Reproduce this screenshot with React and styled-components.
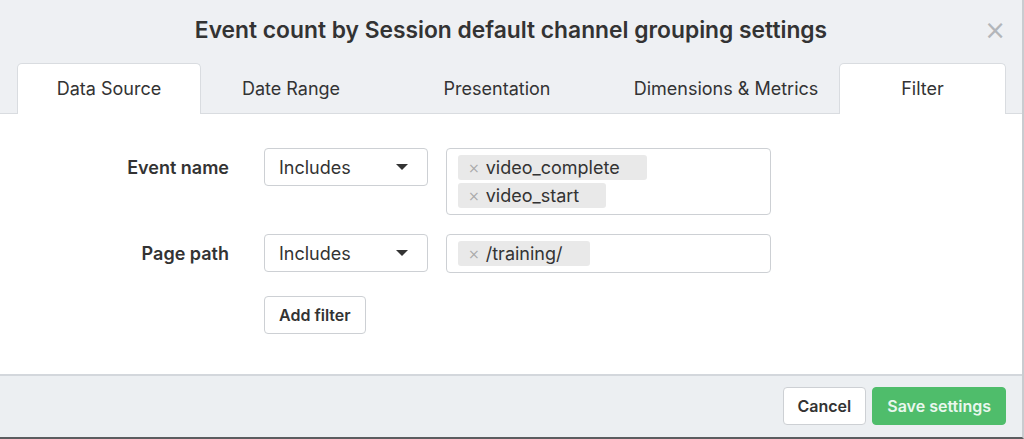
import React from "react";
import styled, { createGlobalStyle } from "styled-components";

const Global = createGlobalStyle`
  html, body { margin: 0; padding: 0; background: #fff; }
  body { font-family: Inter, "Noto Sans", "Liberation Sans", sans-serif; color: #333; }
  * { box-sizing: border-box; }
`;

const Modal = styled.div`
  width: 1024px;
  height: 439px;
  display: flex;
  flex-direction: column;
  background: #fff;
  border-right: 2px solid #c9ccd0;
  border-bottom: 2px solid #5b5d60;
  overflow: hidden;
`;

const Header = styled.div`
  height: 63px;
  flex: none;
  background: #eef0f3;
  display: grid;
  grid-template-columns: 1fr auto 1fr;
  align-items: center;
  padding-bottom: 4px;
`;

const Title = styled.h2`
  grid-column: 2;
  margin: 0;
  font-size: 22.8px;
  font-weight: 600;
  color: #333;
`;

const Close = styled.button`
  grid-column: 3;
  justify-self: end;
  margin-right: 16px;
  border: none;
  background: none;
  padding: 0;
  font-size: 26px;
  line-height: 1;
  color: #b3b6ba;
  font-family: "DejaVu Sans", sans-serif;
`;

const TabStrip = styled.div`
  flex: none;
  height: 51px;
  background: #eef0f3;
  border-bottom: 1px solid #d9dce0;
  padding-left: 17px;
  display: grid;
  grid-template-columns: 184px 180px 232px 226px 167px;
  align-items: end;
`;

const Tab = styled.div`
  height: 51px;
  margin-bottom: -1px;
  display: flex;
  align-items: center;
  justify-content: center;
  font-size: 18px;
  color: #333;
  border: 1px solid ${(p) => (p.$active ? "#d9dce0" : "transparent")};
  border-bottom: none;
  border-radius: 5px 5px 0 0;
  background: ${(p) => (p.$active ? "#fff" : "transparent")};
  padding-bottom: 1px;
`;

const Body = styled.div`
  flex: 1;
  padding-top: 34px;
  display: flex;
  flex-direction: column;
  gap: 19px;
`;

const Row = styled.div`
  display: grid;
  grid-template-columns: 229px 164px 325px;
  align-items: start;
`;

const Label = styled.div`
  line-height: 38px;
  padding-top: 1px;
  text-align: right;
  font-size: 18px;
  font-weight: 600;
  color: #333;
`;

const Select = styled.div`
  height: 38px;
  margin-left: 35px;
  width: 164px;
  border: 1px solid #cdd0d4;
  border-radius: 4px;
  display: flex;
  align-items: center;
  justify-content: space-between;
  padding: 0 19px 0 14px;
  font-size: 18px;
  color: #333;
  background: #fff;
`;

const Caret = styled.span`
  width: 0;
  height: 0;
  border-left: 6px solid transparent;
  border-right: 6px solid transparent;
  border-top: 6px solid #333;
`;

const TagBox = styled.div`
  min-height: 38px;
  margin-left: 53px;
  width: 325px;
  border: 1px solid #cdd0d4;
  border-radius: 4px;
  padding: 6px 11px;
  display: flex;
  flex-wrap: wrap;
  gap: 3px 4px;
  background: #fff;
`;

const Tag = styled.span`
  height: 25px;
  display: inline-flex;
  align-items: center;
  background: #e9e9e9;
  border-radius: 3px;
  padding: 0 27px 0 10px;
  font-size: 18px;
  color: #333;
`;

const TagX = styled.span`
  color: #aaa;
  font-size: 14px;
  margin-right: 6px;
  font-family: "DejaVu Sans", sans-serif;
`;

const ActionRow = styled.div`
  padding-left: 264px;
  margin-top: 4px;
`;

const Button = styled.button`
  height: 38px;
  padding: 0 14px;
  border-radius: 4px;
  font-family: inherit;
  font-size: 16px;
  font-weight: 600;
  border: 1px solid ${(p) => (p.$primary ? "#4fbd6b" : "#cdd0d4")};
  background: ${(p) => (p.$primary ? "#4fbd6b" : "#fff")};
  color: ${(p) => (p.$primary ? "#e9f7ee" : "#333")};
`;

const Footer = styled.div`
  flex: none;
  height: 63px;
  background: #eceff2;
  border-top: 2px solid #d3d7dc;
  display: flex;
  justify-content: flex-end;
  align-items: center;
  gap: 6px;
  padding: 0 16px 2px 0;
`;

const tabs = ["Data Source", "Date Range", "Presentation", "Dimensions & Metrics", "Filter"];

function FilterRow({ label, tags }) {
  return (
    <Row>
      <Label>{label}</Label>
      <Select>
        Includes
        <Caret />
      </Select>
      <TagBox>
        {tags.map((t) => (
          <Tag key={t}>
            <TagX>×</TagX>
            {t}
          </Tag>
        ))}
      </TagBox>
    </Row>
  );
}

export default function App() {
  return (
    <>
      <Global />
      <Modal>
        <Header>
          <Title>Event count by Session default channel grouping settings</Title>
          <Close>×</Close>
        </Header>
        <TabStrip>
          {tabs.map((t, i) => (
            <Tab key={t} $active={i === 0 || i === 4}>
              {t}
            </Tab>
          ))}
        </TabStrip>
        <Body>
          <FilterRow label="Event name" tags={["video_complete", "video_start"]} />
          <FilterRow label="Page path" tags={["/training/"]} />
          <ActionRow>
            <Button>Add filter</Button>
          </ActionRow>
        </Body>
        <Footer>
          <Button>Cancel</Button>
          <Button $primary>Save settings</Button>
        </Footer>
      </Modal>
    </>
  );
}
